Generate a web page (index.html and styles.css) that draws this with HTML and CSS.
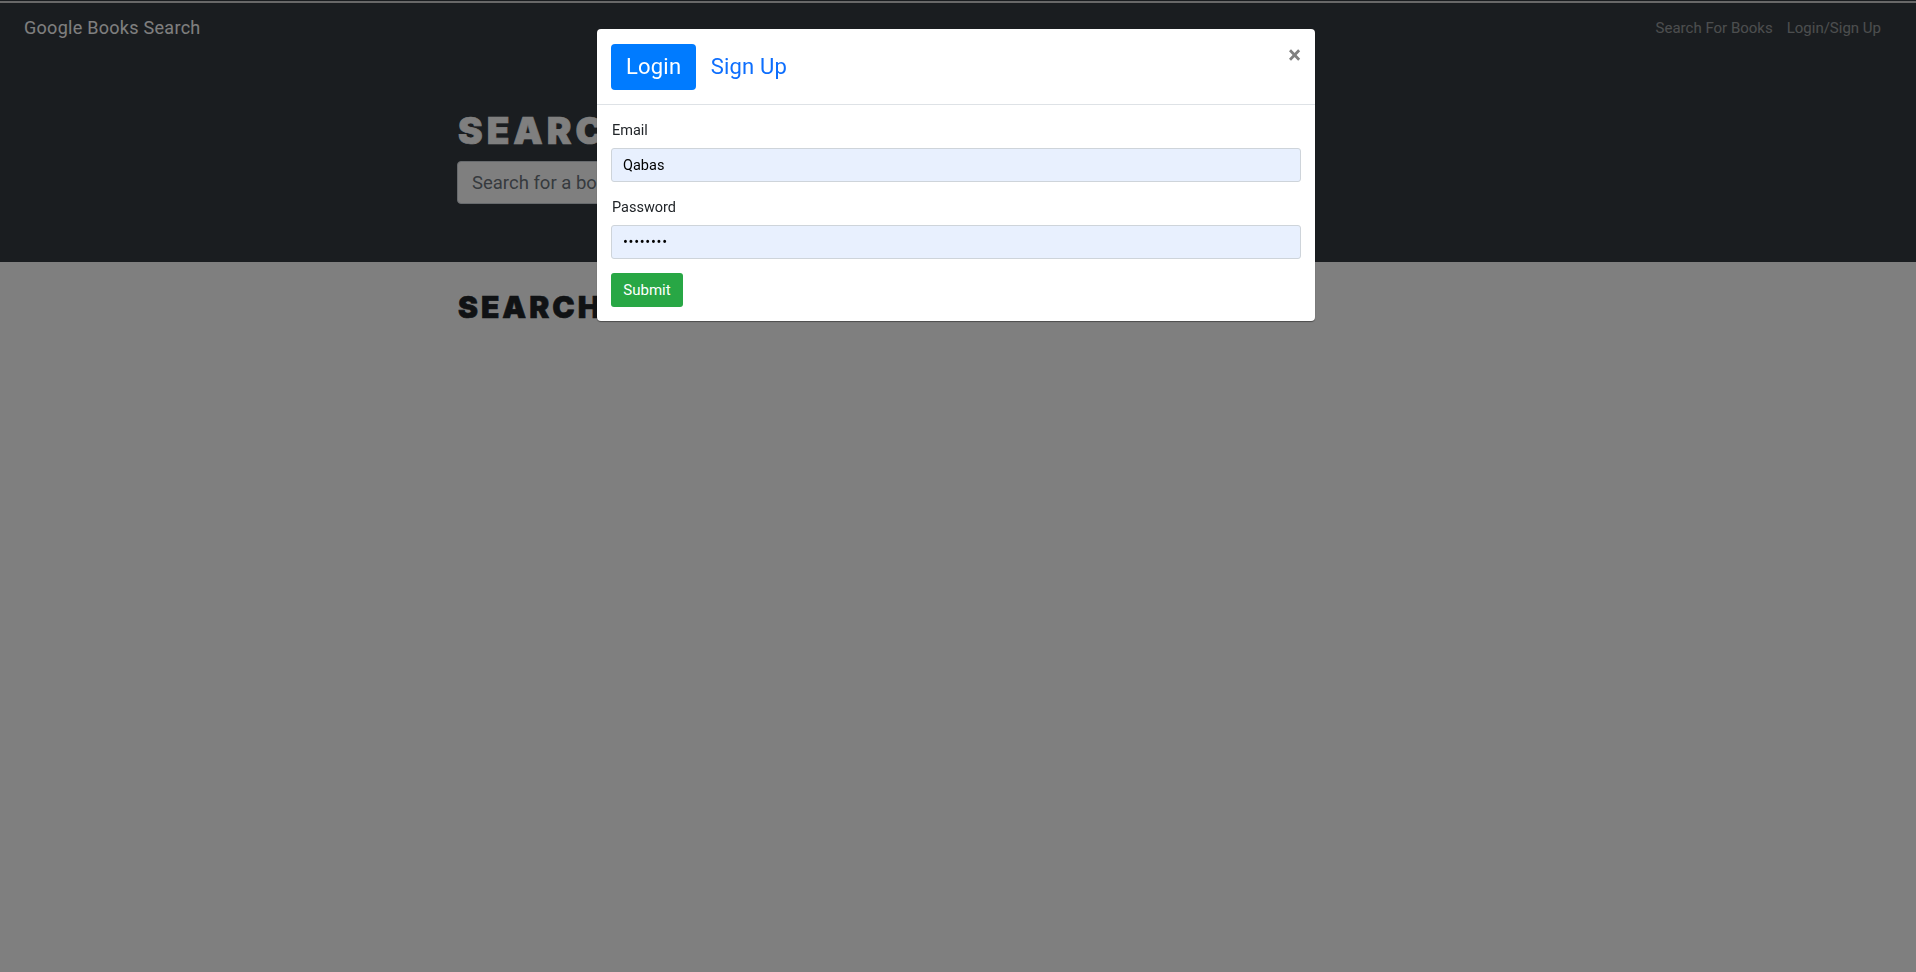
FILE: index.html
```html
<!DOCTYPE html>
<html lang="en">
<head>
<meta charset="utf-8">
<title>Google Books Search</title>
<link rel="stylesheet" href="styles.css">
</head>
<body>
<div class="page-top">
  <div class="topline"></div>
  <nav class="navbar">
    <a class="brand" href="#">Google Books Search</a>
    <div class="nav-links">
      <a href="#">Search For Books</a>
      <a href="#">Login/Sign Up</a>
    </div>
  </nav>
  <header class="hero">
    <div class="container">
      <h1 class="hero-title">SEARCH FOR BOOKS!</h1>
      <input class="search-input" placeholder="Search for a book">
    </div>
  </header>
</div>
<main class="container results">
  <h2 class="results-title">SEARCH FOR A BOOK TO BEGIN</h2>
</main>
<div class="backdrop"></div>
<div class="modal">
  <div class="modal-header">
    <div class="tabs">
      <a class="tab active" href="#">Login</a>
      <a class="tab" href="#">Sign Up</a>
    </div>
    <span class="close">×</span>
  </div>
  <form class="modal-body">
    <label class="label">Email</label>
    <input class="field" value="Qabas">
    <label class="label">Password</label>
    <input class="field field-password" type="password" value="password">
    <button class="submit" type="button">Submit</button>
  </form>
</div>
</body>
</html>
```
FILE: styles.css
```css
* { box-sizing: border-box; }
html, body { margin: 0; height: 100%; }
body { background: #fff; color: #212529; font-family: Roboto, "Liberation Sans", sans-serif; overflow: hidden; }
a { text-decoration: none; }
.page-top { background: #343a40; padding-top: 1px; }
.topline { height: 2px; background: #d0d0d0; }
.navbar { height: 50px; display: flex; justify-content: space-between; align-items: center; padding: 0 35px 0 24px; }
.brand { color: #fff; font-size: 18px; letter-spacing: .28px; margin-top: -1px; }
.nav-links { display: flex; gap: 14px; }
.nav-links a { color: rgba(255,255,255,.5); font-size: 15px; }
.hero { height: 209px; padding-top: 54px; }
.container { width: 1000px; margin: 0 auto; }
.hero-title { margin: 0 0 6px; color: #fff; font-family: Inter, sans-serif; font-weight: 900; font-size: 37px; line-height: 48px; letter-spacing: 4px; -webkit-text-stroke: .7px #fff; }
.search-input { display: block; width: 800px; height: 43px; margin-left: -1px; border: 1px solid #ced4da; border-radius: 4px; background: #fff; padding: 0 14px; font: 18.5px Roboto, sans-serif; }
.search-input::placeholder { color: #6c757d; }
.results { padding-top: 26px; }
.results-title { margin: 0; color: #212529; font-family: Inter, sans-serif; font-weight: 900; font-size: 30px; line-height: 38px; letter-spacing: 3px; -webkit-text-stroke: .6px #212529; }
.backdrop { position: fixed; inset: 0; background: rgba(0,0,0,.5); }
.modal { position: fixed; left: 597px; top: 29px; width: 718px; height: 292px; background: #fff; border-radius: 4px; box-shadow: 0 1px 1px rgba(0,0,0,.4); }
.modal-header { height: 76px; border-bottom: 1px solid #dee2e6; padding: 15px 14px; display: flex; justify-content: space-between; }
.tabs { display: flex; }
.tab { height: 46px; padding: 0 15px 0 14.5px; line-height: 46px; font-size: 22px; letter-spacing: .2px; color: #0d6efd; border-radius: 4px; }
.tab.active { background: #007bff; color: #fff; padding: 0 15px; }
.close { color: #7f7f7f; font-size: 24px; font-weight: 700; line-height: 24px; margin: -1px 0 0 0; }
.modal-body { padding: 14px; display: flex; flex-direction: column; align-items: flex-start; }
.label { font-size: 14.5px; line-height: 22px; padding: 1px 0 0 1px; margin-bottom: 6px; height: 23px; }
.field { width: 100%; height: 34px; border: 1px solid #ced4da; border-radius: 3px; background: #e8f0fe; padding: 0 11px; font: 14.5px Roboto, sans-serif; margin-bottom: 14px; color: #000; }
.field-password { letter-spacing: .7px; }
.submit { width: 72px; height: 34px; border: 0; border-radius: 3px; background: #28a745; color: #fff; font: 15px Roboto, sans-serif; }
```
